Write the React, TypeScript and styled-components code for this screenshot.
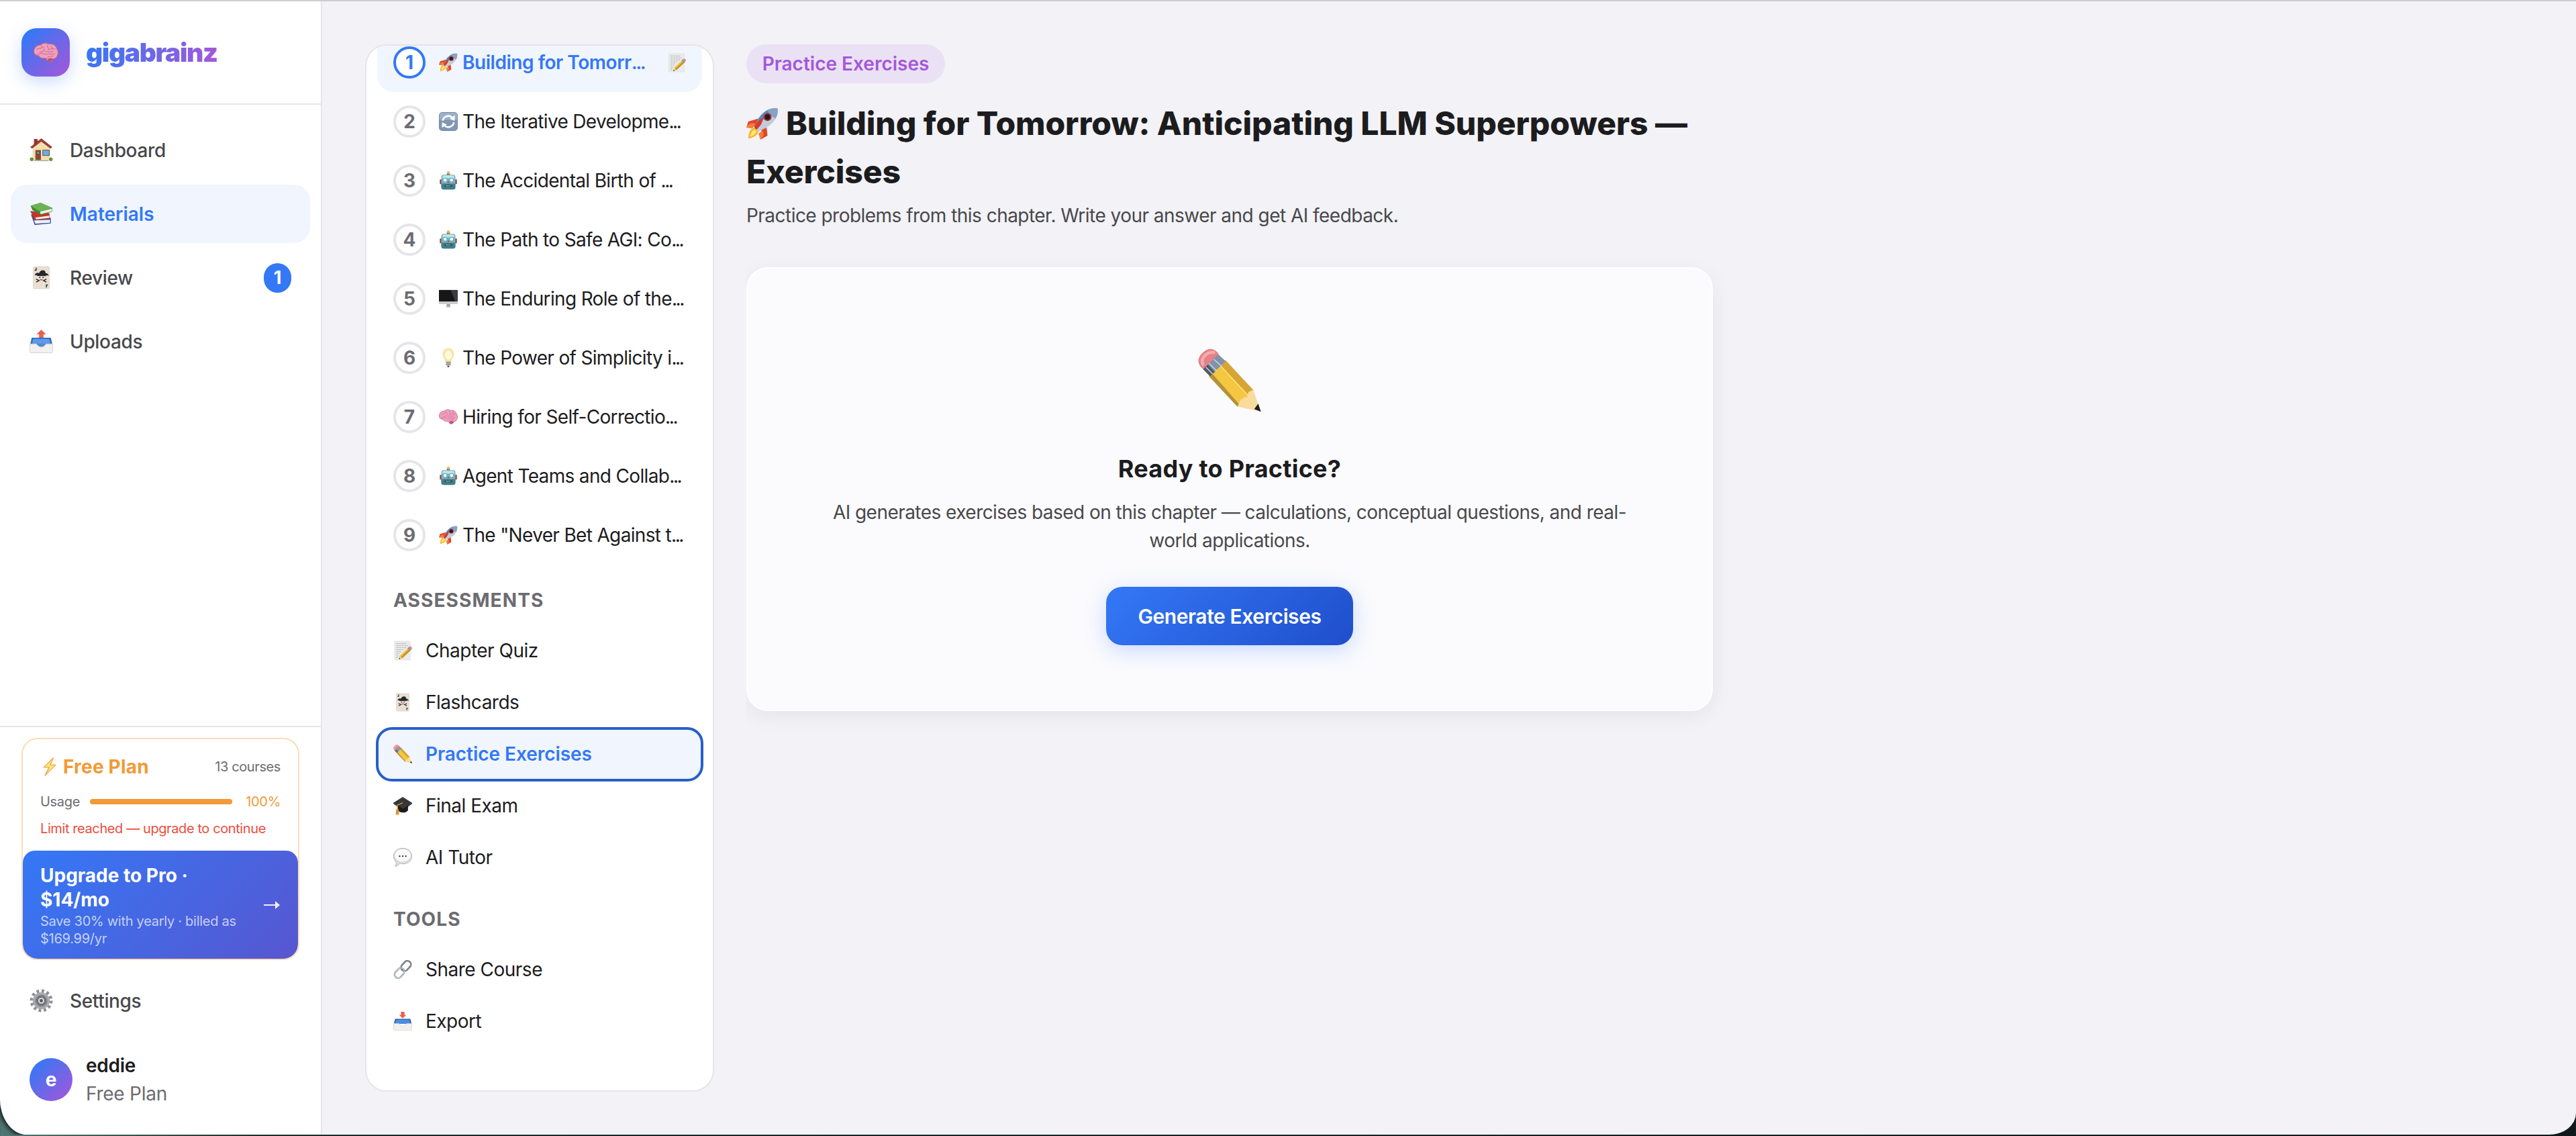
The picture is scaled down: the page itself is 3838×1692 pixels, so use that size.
import React from "react";
import styled, { createGlobalStyle, css } from 'styled-components'

const colors = {
    page: '#f2f2f7',
    surface: '#ffffff',
    line: '#e5e5ea',
    text: '#1c1c1e',
    textSoft: '#48484a',
    textMuted: '#6c6c70',
    blue: '#3478f6',
    blueTint: '#f0f5fe',
    purple: '#a458da',
    orange: '#f19a37',
    red: '#eb4e3d',
}

const GlobalStyle = createGlobalStyle`
    * {
        box-sizing: border-box;
    }

    body {
        margin: 0;
        overflow: hidden;
        background: linear-gradient(90deg, #4f7773 0, #1d2b2b 400px, #10181a 100%);
        font-family: Inter, "Liberation Sans", sans-serif;
        font-size: 28px;
        color: ${colors.text};
    }

    h1, h2, h3, p {
        margin: 0;
    }
`

/* ---------- icons ---------- */

const glyphs = {
    brain: <>
        <path d="M.5 15C0 10 4 6 9 6c3-3 8-3 11-1 5-1 9 2 10 6 2 3 2 7 0 10-1 2-3 3-5 3 0 3-3 5-6 3-2-1-3-3-3-4-4 1-8 0-9-3-4 0-6-2-6.500-5z" fill="#f0a0bd" stroke="#c4668b" strokeWidth="1" />
        <path d="M4 12c3-3 5 0 7-3M10 7c1 2 4 1 4 4s-3 4-6 4M18 6c-1 3 2 3 1 6M20 12c3-2 5 0 8-1M15 15c3-2 6 2 10-1M4 18c3 0 4-2 7-1s4 2 7 1 6 1 9-1M18 22c2-2 5 0 7-2M23 7c-1 2 1 3 2 3" fill="none" stroke="#cc7398" strokeWidth="1" strokeLinecap="round" />
        <path d="M18 24c2-1 5-2 7 0-1 3-4 5-7 3z" fill="#b5596f" />
    </>,
    house: <>
        <path d="M6 1h5v9H6z" fill="#9b3a2c" />
        <path d="M4 13 16 3l12 10v16H4z" fill="#f3deb0" />
        <path d="M1.500 12 16 .5 30.500 12l-2 1.500L16 4 3.500 13.500z" fill="#b13b30" stroke="#5d2a25" strokeWidth=".7" />
        <path d="M8 16h7.500v14H8z" fill="#8a4a30" />
        <path d="M10 18h3.500v3.500H10zM18 16h9v7.500h-9z" fill="#6cabdc" stroke="#5f4a41" strokeWidth=".8" />
        <path d="M6 29.500h20v1.500H6z" fill="#b8ada4" />
        <circle cx="3" cy="28.500" r="2.500" fill="#62963b" />
        <circle cx="29" cy="28.500" r="2.500" fill="#62963b" />
    </>,
    books: <>
        <path d="m2 17 5 14 22-2v-7z" fill="#2f4796" />
        <path d="m6 25 22-1v4L8 29.500z" fill="#eeeef3" />
        <path d="m1 12 6 13 21-2.500-1-7.500z" fill="#c53526" />
        <path d="m8 21 19-2.500v3L9 23.500z" fill="#f2ede8" />
        <path d="M1.500 5 15 1l16 7v5l-16 4.500L4 11z" fill="#3f8a35" />
        <path d="M1.500 5 15 1l16 7-16.500 5z" fill="#6cb453" />
        <path d="m14.500 13 16-4v3.500l-15.500 4z" fill="#eff2ea" />
    </>,
    joker: <>
        <rect x="5" y="1" width="22" height="30" rx="1.500" fill="#e9e0d4" stroke="#d6cbbd" strokeWidth=".6" />
        <path d="M9 2.500V6H7M23 29.500V26h2" fill="none" stroke="#2a2a2c" strokeWidth="1.300" />
        <path d="M7 13c1-4 5-4 6-3 1-5 9-6 9 0 3 0 4 2 4 4-2-2-3-1-4 0H11c-1-1-2-2-4-1z" fill="#25282c" />
        <path d="M11 14h10v4l-5 3-5-3z" fill="#f3dfd6" />
        <path d="m9 18 4 2-4 2M23 18l-4 2 4 2M13 15.500h2M17.500 15.500h2" fill="none" stroke="#25282c" strokeWidth="1.300" />
        <path d="M13 18h6l-3 2z" fill="#cf4b46" />
    </>,
    outbox: <>
        <path d="m16 0 6.500 6.500H19V11h-6V6.500H9.500z" fill="#e9604e" />
        <path d="M3 11h26l2 9H1z" fill="#2f6bb5" />
        <path d="M5 12.500h22l2 8H3z" fill="#5d9ae8" />
        <path d="M10 19c2 6 10 6 12 0z" fill="#4f88cf" />
        <path d="M.5 19.500h9c2 6 11 6 13 0h9V30q0 1.500-1.500 1.500H2Q.5 31.500.5 30z" fill="#f2f1ef" stroke="#cfcfcf" strokeWidth=".8" />
    </>,
    inbox: <>
        <path d="m16 11 6-5.500h-3V0h-6v5.500h-3z" fill="#e9604e" />
        <path d="M3 12h26l2 8H1z" fill="#2f5fa0" />
        <path d="M5 13.500h22l2 7H3z" fill="#4d8de2" />
        <path d="M.5 20h9c2 6 11 6 13 0h9V30q0 1.500-1.500 1.500H2Q.5 31.500.5 30z" fill="#f2f1ef" stroke="#cfcfcf" strokeWidth=".8" />
    </>,
    rocket: <>
        <path d="M12 11 2 14l-2 6 9-1zM20 19l1 9-7 4 1-10z" fill="#e2452b" />
        <path d="M0 20c2-4 5-5 9-4l-3 5zM14 32c3-3 4-5 2-9l-4 3z" fill="#f47e3a" />
        <path d="M8 20c-4 1-6 5-6 11 5-1 9-3 10-7z" fill="#fbb52c" />
        <path d="M8 22c-2 1-4 4-4 7 3-1 5-3 6-5z" fill="#fdec7a" />
        <path d="M31 1c-8-1-14 3-19 10l-4 9 4 4 8-4C28 15 32 9 31 1z" fill="#c2ccd8" />
        <path d="M31 1c-8-1-14 3-19 10l-4 9 2 2C14 14 22 5 31 1z" fill="#5c88bf" />
        <path d="M31 1c-4-.5-7 0-10 2 2 4 4 6 8 8 2-3 2.500-6 2-10z" fill="#87a2c4" />
        <circle cx="21" cy="9.500" r="4" fill="#a52f2b" />
        <circle cx="21" cy="9.500" r="2.600" fill="#1e1c22" />
        <path d="M8 20c2-5 5-8 9-10-1 5-3 9-7 12z" fill="#d43c2d" />
    </>,
    refresh: <>
        <rect x=".5" y=".5" width="31" height="31" rx="5" fill="#8097b4" stroke="#677d9a" />
        <path d="M1 6q0-5 5-5h20q5 0 5 5v7H1z" fill="#9db0c8" />
        <path d="M6.500 14.500A9.700 9.700 0 0 1 22.500 9M25.500 17.500A9.700 9.700 0 0 1 9.500 23" fill="none" stroke="#fff" strokeWidth="3" />
        <path d="m27 5.500-.5 9.500-8-4zM5 26.500l.5-9.500 8 4z" fill="#fff" />
    </>,
    robot: <>
        <path d="M13.500 3h5v4h-5z" fill="#5b4a93" />
        <circle cx="16" cy="2.500" r="2.500" fill="#f0b44a" />
        <path d="M1.500 14h4v8h-4zM26.500 14h4v8h-4z" fill="#a93a38" />
        <rect x="4" y="6" width="24" height="25" rx="4" fill="#7cb3bb" />
        <path d="M4 21h24v6q0 4-4 4H8q-4 0-4-4z" fill="#3f7f8b" />
        <path d="M6 10q0-3 3-3h14q3 0 3 3v2H6z" fill="#c5e6e8" />
        <circle cx="10.500" cy="15" r="3.400" fill="#fff" stroke="#4fb3d4" strokeWidth="1.500" />
        <circle cx="21.500" cy="15" r="3.400" fill="#fff" stroke="#4fb3d4" strokeWidth="1.500" />
        <path d="m16 16 2.200 4h-4.400z" fill="#d8493c" />
        <path d="M10 23.500h12v3H10z" fill="#1f3b42" />
        <path d="M12 25h8" stroke="#fff" strokeWidth="1.600" strokeDasharray="1.500 1" />
    </>,
    desktop: <>
        <path d="M13 25h6v5h-6z" fill="#a0a0a5" />
        <path d="M12 29h8v1.500h-8z" fill="#c3c3c8" />
        <path d="M0 1h32v20H0z" fill="#161616" />
        <path d="M20 1h12v20h-4z" fill="#3c3c3e" />
        <path d="M0 20.500h32V25H0z" fill="#c9c9ce" />
    </>,
    bulb: <>
        <path d="M16 0c5.500 0 9 4 9 9 0 6-4 8-4.500 14h-9C11 17 7 15 7 9c0-5 3.500-9 9-9z" fill="#f8e9a4" stroke="#e9d688" strokeWidth=".8" />
        <ellipse cx="16" cy="11" rx="5.500" ry="8" fill="#fffbe3" />
        <path d="M12 22h8v6l-2 2h-4l-2-2z" fill="#b5b5ae" />
        <path d="M12 24.500h8M12 27h8" stroke="#85857f" strokeWidth="1" />
        <path d="M14 30h4l-1 2h-2z" fill="#3b3b3b" />
    </>,
    memo: <>
        <path d="M2 0h27v32H2z" fill="#ebebec" stroke="#d8d8d9" strokeWidth=".6" />
        <path d="M5 4h18M5 7.500h20M5 11h18M5 14.500h12M5 18h8M5 21.500h6M5 25h4M5 28h3" stroke="#a2a2a5" strokeWidth=".9" strokeDasharray="3.500 1" />
        <path d="m27 10 4 4-16 15-5 1 1-5z" fill="#f0bf35" />
        <path d="m29 12 2 2-16 15-2-2z" fill="#c88f23" />
        <path d="m24 12 3-2.500 4 4-3 3z" fill="#8c9bb3" />
        <path d="m26.500 10 1.500-1.500q4 0 4 4l-1.500 1.500z" fill="#e88b8d" />
        <path d="m11 25 4 4-5 1.500z" fill="#f1d59b" />
        <path d="m10.400 28 1.800 2-2.700.7z" fill="#2b2b2b" />
    </>,
    pencil: <>
        <path d="M5.500 14 14 6l14 15.500-8 8z" fill="#f5c640" />
        <path d="m11 9 3-3 14 15-2.500 3z" fill="#d7a536" />
        <path d="m5.500 14 1.500-1.500 14 16-1 1z" fill="#b3903a" />
        <path d="m11 8.500 14.500 15.500" stroke="#ffe377" strokeWidth=".6" />
        <path d="m20 29.500 1.500-3.500 1.500-1 2-.5.500-2.500 2.500-1L31.800 32z" fill="#f8dc9c" />
        <path d="m28.500 30.700 2-2.700 1.400 4.100z" fill="#1b1d22" />
        <path d="M2.500 10.500 10 2.700 14 6.500 6 14z" fill="#8192a9" />
        <path d="M2.500 10.500 5 8l3.500 4L6 14z" fill="#515a66" />
        <path d="m4 9.500 3.500 3.500M5.500 7.500 9.500 11.500M8 5.500l4 3.500" stroke="#c7d5e6" strokeWidth=".5" />
        <path d="M2.500 10.500C-.5 8-.5 5 2 2.500S7.500-1 10.500 2.700z" fill="#e58287" />
        <path d="M2.500 8C1 5.500 4 1.500 8 2" fill="none" stroke="#f2acab" strokeWidth="1.500" strokeLinecap="round" />
    </>,
    cap: <>
        <path d="M8 16v8c2 4 13 6 17 0v-8z" fill="#1d1d1f" />
        <path d="M16 1 32 11 17 22 0 11z" fill="#37373a" />
        <path d="M0 11 17 22l15-11v1.500L17 24 0 12.500z" fill="#141416" />
        <path d="M16 11 7 15v9" fill="none" stroke="#d9963a" strokeWidth="1.600" />
        <path d="M5 22h4l1 9-6 .5z" fill="#d99432" />
    </>,
    speech: <>
        <path d="M16 .5c9 0 15.500 5.500 15.500 13.500S25 27 16 27c-2 0-4-.2-5-.6C9 29 6 31 3 31.500c1.500-2 2-4 2-7C2 22 .5 18 .5 14 .5 6 7 .5 16 .5z" fill="#dcdcde" stroke="#adadb0" strokeWidth="1" />
        <ellipse cx="16" cy="12.500" rx="13.500" ry="10.500" fill="#fafafa" />
        <path d="M9.500 14h2.400M14.800 14h2.400M20.100 14h2.400" stroke="#2c2c2e" strokeWidth="2.400" />
    </>,
    link: <>
        <rect x="-9.500" y="-6" width="19" height="12" rx="6" transform="translate(21.500 10) rotate(-48)" fill="none" stroke="#55565c" strokeWidth="2.800" />
        <rect x="-9.500" y="-6" width="19" height="12" rx="6" transform="translate(21.200 10.300) rotate(-48)" fill="none" stroke="#aebdcc" strokeWidth="1" />
        <rect x="-9.500" y="-6" width="19" height="12" rx="6" transform="translate(10.500 22) rotate(-48)" fill="none" stroke="#78838f" strokeWidth="2.800" />
        <rect x="-9.500" y="-6" width="19" height="12" rx="6" transform="translate(10.500 22) rotate(-48)" fill="none" stroke="#dbe6f1" strokeWidth="1.200" />
    </>,
    gear: <>
        <circle cx="16" cy="16" r="13.200" fill="none" stroke="#8d8f94" strokeWidth="4.600" strokeDasharray="3.500 3.410" />
        <circle cx="16" cy="16" r="10" fill="#8a8d92" stroke="#a8abb0" strokeWidth="3" />
        <circle cx="16" cy="16" r="6.800" fill="#6f7277" />
        <circle cx="16" cy="16" r="3.200" fill="#55575b" stroke="#d7d9dc" strokeWidth="2" />
    </>,
    bolt: <>
        <path d="M22 1 6 17h9L8 31 26 13h-9z" fill="#fbe48b" stroke="#f0a638" strokeWidth="1.500" strokeLinejoin="round" />
    </>,
}

type GlyphName = keyof typeof glyphs

const GlyphSvg = styled.svg<{ $size: number }>`
    width: ${p => p.$size}px;
    height: ${p => p.$size}px;
    flex: none;
    overflow: visible;
`

function Glyph({ name, size = 28 }: { name: GlyphName, size?: number }) {
    return <GlyphSvg viewBox="0 0 32 32" $size={size} aria-hidden>{glyphs[name]}</GlyphSvg>
}

/* ---------- shell ---------- */

const AppWindow = styled.div`
    display: flex;
    height: 1690px;
    overflow: hidden;
    border-top: 2px solid #cdcdcd;
    border-radius: 0 0 40px 40px / 0 0 32px 54px;
    box-shadow: 0 0 6px 3px #14191f;
    background: ${colors.page};
`

const SidebarStyle = styled.aside`
    display: flex;
    flex-direction: column;
    flex: none;
    width: 480px;
    background: ${colors.surface};
    border-right: 2px solid ${colors.line};
`

const BrandStyle = styled.div`
    display: flex;
    align-items: center;
    gap: 24px;
    height: 154px;
    padding: 0 32px;
    border-bottom: 2px solid ${colors.line};
`

const BrandMark = styled.div`
    display: flex;
    align-items: center;
    justify-content: center;
    width: 72px;
    height: 72px;
    border-radius: 22px;
    background: linear-gradient(135deg, ${colors.blue} 10%, #a855d8);
    box-shadow: 0 8px 24px rgba(52, 120, 246, 0.25);
`

const BrandName = styled.div`
    font-size: 39px;
    font-weight: 900;
    letter-spacing: -1.4px;
    line-height: 54px;
    background: linear-gradient(100deg, ${colors.blue}, #a458da);
    background-clip: text;
    color: transparent;
`

const NavStyle = styled.nav`
    display: flex;
    flex-direction: column;
    flex: 1;
    gap: 8px;
    padding: 24px 16px;
`

const NavItemStyle = styled.a<{ $active?: boolean }>`
    display: flex;
    align-items: center;
    gap: 25px;
    height: 87px;
    padding: 0 28px;
    border-radius: 24px;
    font-weight: ${p => p.$active ? 600 : 500};
    letter-spacing: ${p => p.$active ? 0 : -0.35}px;
    color: ${p => p.$active ? colors.blue : colors.textSoft};
    background: ${p => p.$active ? colors.blueTint : 'transparent'};
`

const NavBadge = styled.span`
    display: flex;
    align-items: center;
    justify-content: center;
    width: 41px;
    height: 44px;
    margin-left: auto;
    border-radius: 21px;
    background: ${colors.blue};
    color: #fff;
    font-size: 27px;
    font-weight: 700;
`

type NavItemProps = { icon: GlyphName, label: string, active?: boolean, badge?: number }

function NavItem({ icon, label, active, badge }: NavItemProps) {
    return <NavItemStyle $active={active}>
        <Glyph name={icon} size={35} />
        {label}
        {badge && <NavBadge>{badge}</NavBadge>}
    </NavItemStyle>
}

const SidebarFooter = styled.div`
    height: 609px;
    padding: 16px;
    border-top: 2px solid ${colors.line};
`

const PlanCard = styled.div`
    height: 331px;
    margin: 0 16px 17px;
    border: 2px solid #fbdcb8;
    border-radius: 24px;
    overflow: hidden;
`

const PlanInfo = styled.div`
    height: 166px;
    padding: 23px 26px 0;
    font-size: 20px;
    letter-spacing: -0.4px;
    color: ${colors.textMuted};
`

const PlanRow = styled.div`
    display: flex;
    align-items: center;
    justify-content: space-between;
    height: 36px;
`

const PlanName = styled.div`
    display: flex;
    align-items: center;
    gap: 6px;
    font-size: 28px;
    font-weight: 700;
    letter-spacing: 0.2px;
    color: ${colors.orange};
`

const UsageRow = styled(PlanRow)`
    height: 28px;
    margin: 20px 0 13px;
    letter-spacing: -0.3px;

    b {
        font-weight: 400;
        color: ${colors.orange};
    }
`

const UsageBar = styled.div`
    width: 212px;
    height: 8px;
    margin-left: -5px;
    border-radius: 4px;
    background: ${colors.orange};
`

const LimitNote = styled.p`
    line-height: 26px;
    letter-spacing: -0.4px;
    white-space: nowrap;
    color: ${colors.red};
`

const UpgradeButton = styled.div`
    display: flex;
    align-items: center;
    justify-content: space-between;
    height: 162px;
    padding: 0 27px 0 26px;
    border-radius: 18px 18px 22px 22px;
    color: #fff;
    background: linear-gradient(135deg, ${colors.blue}, #5856d0);

    h3 {
        font-size: 28px;
        line-height: 36px;
        font-weight: 700;
        letter-spacing: 0;
    }

    p {
        margin-top: 1px;
        font-size: 20px;
        line-height: 26px;
        letter-spacing: -0.27px;
        white-space: nowrap;
        color: rgba(255, 255, 255, 0.7);
    }
`

const ArrowSvg = styled.svg`
    width: 24px;
    height: 12px;
    flex: none;
`

const UserRow = styled.div`
    display: flex;
    align-items: center;
    gap: 20px;
    height: 84px;
    margin-top: 32px;
    padding: 0 28px;
    line-height: 42px;
    letter-spacing: -0.25px;
    color: ${colors.textMuted};

    strong {
        display: block;
        font-weight: 600;
        color: ${colors.text};
    }
`

const Avatar = styled.div`
    display: flex;
    align-items: center;
    justify-content: center;
    width: 64px;
    height: 64px;
    border-radius: 50%;
    font-weight: 700;
    color: #fff;
    background: linear-gradient(135deg, ${colors.blue} 10%, #a855d8);
`

function Sidebar() {
    return <SidebarStyle>
        <BrandStyle>
            <BrandMark><Glyph name="brain" size={37} /></BrandMark>
            <BrandName>gigabrainz</BrandName>
        </BrandStyle>
        <NavStyle>
            <NavItem icon="house" label="Dashboard" />
            <NavItem icon="books" label="Materials" active />
            <NavItem icon="joker" label="Review" badge={1} />
            <NavItem icon="outbox" label="Uploads" />
        </NavStyle>
        <SidebarFooter>
            <PlanCard>
                <PlanInfo>
                    <PlanRow>
                        <PlanName><Glyph name="bolt" />Free Plan</PlanName>
                        <span>13 courses</span>
                    </PlanRow>
                    <UsageRow>
                        <span>Usage</span>
                        <UsageBar />
                        <b>100%</b>
                    </UsageRow>
                    <LimitNote>Limit reached — upgrade to continue</LimitNote>
                </PlanInfo>
                <UpgradeButton>
                    <div>
                        <h3>Upgrade to Pro ·<br />$14/mo</h3>
                        <p>Save 30% with yearly · billed as<br />$169.99/yr</p>
                    </div>
                    <ArrowSvg viewBox="0 0 24 12">
                        <path d="M0 5h17V0l7 6-7 6V7H0z" fill="#fff" fillOpacity=".9" />
                    </ArrowSvg>
                </UpgradeButton>
            </PlanCard>
            <NavItem icon="gear" label="Settings" />
            <UserRow>
                <Avatar>e</Avatar>
                <div>
                    <strong>eddie</strong>
                    Free Plan
                </div>
            </UserRow>
        </SidebarFooter>
    </SidebarStyle>
}

/* ---------- course outline ---------- */

const Content = styled.main`
    display: flex;
    align-items: flex-start;
    gap: 48px;
    padding: 64px;
`

const OutlineStyle = styled.div`
    flex: none;
    width: 520px;
    height: 1560px;
    padding: 0 16px;
    overflow: hidden;
    border: 2px solid ${colors.line};
    border-radius: 32px;
    background: ${colors.surface};
`

/* the list is scrolled down a little, so the first row is cut off */
const OutlineList = styled.div`
    margin-top: -19px;
`

const activeRow = css`
    font-weight: 600;
    color: ${colors.blue};
    background: ${colors.blueTint};
`

const ChapterRow = styled.div<{ $active?: boolean }>`
    display: flex;
    align-items: center;
    height: 88px;
    padding: 0 24px;
    border-radius: 24px;
    letter-spacing: ${p => p.$active ? -0.45 : -0.66}px;
    white-space: nowrap;
    ${p => p.$active && activeRow}

    svg:last-child {
        margin-left: auto;
    }
`

const ChapterNumber = styled.span<{ $active?: boolean }>`
    display: flex;
    align-items: center;
    justify-content: center;
    flex: none;
    width: 48px;
    height: 48px;
    margin-right: 20px;
    border: 4px solid ${p => p.$active ? colors.blue : colors.line};
    border-radius: 50%;
    background: ${colors.surface};
    font-weight: 700;
    letter-spacing: 0;
    color: ${p => p.$active ? colors.blue : colors.textMuted};
`

const ChapterTitle = styled.span`
    margin-left: 7px;
`

const Ellipsis = styled.span`
    letter-spacing: -2.4px;
`

const SectionHeading = styled.h3`
    height: 89.5px;
    padding: 35px 24px 0;
    font-size: 28px;
    line-height: 36px;
    font-weight: 700;
    letter-spacing: 1.1px;
    color: ${colors.textMuted};
`

const ToolRow = styled.div<{ $active?: boolean }>`
    display: flex;
    align-items: center;
    gap: 20px;
    height: 77px;
    padding: 0 24px;
    border-radius: 22px;
    letter-spacing: ${p => p.$active ? -0.05 : -0.5}px;
    ${p => p.$active && css`
        ${activeRow}
        outline: 4px solid #285fc9;
        outline-offset: -2px;
    `}
`

const chapters: { icon: GlyphName, title: string }[] = [
    { icon: 'rocket', title: 'Building for Tomorr' },
    { icon: 'refresh', title: 'The Iterative Developme' },
    { icon: 'robot', title: 'The Accidental Birth of ' },
    { icon: 'robot', title: 'The Path to Safe AGI: Co' },
    { icon: 'desktop', title: 'The Enduring Role of the' },
    { icon: 'bulb', title: 'The Power of Simplicity i' },
    { icon: 'brain', title: 'Hiring for Self-Correctio' },
    { icon: 'robot', title: 'Agent Teams and Collab' },
    { icon: 'rocket', title: 'The "Never Bet Against t' },
]

const assessments: { icon: GlyphName, label: string }[] = [
    { icon: 'memo', label: 'Chapter Quiz' },
    { icon: 'joker', label: 'Flashcards' },
    { icon: 'pencil', label: 'Practice Exercises' },
    { icon: 'cap', label: 'Final Exam' },
    { icon: 'speech', label: 'AI Tutor' },
]

const tools: { icon: GlyphName, label: string }[] = [
    { icon: 'link', label: 'Share Course' },
    { icon: 'inbox', label: 'Export' },
]

function CourseOutline() {
    return <OutlineStyle>
        <OutlineList>
            { chapters.map((chapter, i) => (
                <ChapterRow key={i} $active={i === 0}>
                    <ChapterNumber $active={i === 0}>{i + 1}</ChapterNumber>
                    <Glyph name={chapter.icon} />
                    <ChapterTitle>{chapter.title}<Ellipsis>...</Ellipsis></ChapterTitle>
                    {i === 0 && <Glyph name="memo" size={27} />}
                </ChapterRow>
            )) }
            <SectionHeading>ASSESSMENTS</SectionHeading>
            { assessments.map(item => (
                <ToolRow key={item.label} $active={item.label === 'Practice Exercises'}>
                    <Glyph name={item.icon} />{item.label}
                </ToolRow>
            )) }
            <SectionHeading>TOOLS</SectionHeading>
            { tools.map(item => (
                <ToolRow key={item.label}>
                    <Glyph name={item.icon} />{item.label}
                </ToolRow>
            )) }
        </OutlineList>
    </OutlineStyle>
}

/* ---------- exercises ---------- */

const Exercises = styled.section`
    flex: none;
    width: 1440px;
`

const Tag = styled.div`
    display: inline-flex;
    align-items: center;
    justify-content: center;
    width: 296px;
    height: 58px;
    border-radius: 29px;
    font-weight: 600;
    color: ${colors.purple};
    background: #ebe1f4;
`

const Title = styled.h1`
    margin-top: 24px;
    font-size: 48px;
    line-height: 72px;
    font-weight: 800;
    letter-spacing: -0.07px;
    white-space: nowrap;

    svg {
        margin-right: 11px;
        vertical-align: -7px;
    }
`

const Subtitle = styled.p`
    margin-top: 8px;
    line-height: 42px;
    letter-spacing: -0.53px;
    color: ${colors.textSoft};
`

const EmptyCard = styled.div`
    display: flex;
    flex-direction: column;
    align-items: center;
    height: 661px;
    margin-top: 56px;
    padding-top: 119px;
    border: 2px solid #fff;
    border-radius: 32px;
    background: #fbfbfe;
    box-shadow: 0 8px 32px rgba(0, 0, 0, 0.06);
    clip-path: inset(-60px -60px -60px 0);
    text-align: center;

    h2 {
        margin-top: 58px;
        font-size: 36px;
        line-height: 54px;
        font-weight: 700;
        letter-spacing: 0.25px;
    }

    p {
        margin-top: 17px;
        line-height: 42px;
        letter-spacing: -0.54px;
        white-space: nowrap;
        color: ${colors.textSoft};
    }
`

const PrimaryButton = styled.button`
    width: 368px;
    height: 87px;
    margin-top: 48px;
    padding: 0;
    border: 0;
    border-radius: 24px;
    font: 600 30px Inter, "Liberation Sans", sans-serif;
    letter-spacing: -0.4px;
    white-space: nowrap;
    color: #fff;
    background: linear-gradient(135deg, ${colors.blue}, #1f4ecb);
    box-shadow: 0 8px 32px rgba(52, 120, 246, 0.25);
`

function PracticeExercises() {
    return <Exercises>
        <Tag>Practice Exercises</Tag>
        <Title>
            <Glyph name="rocket" size={48} />
            Building for Tomorrow: Anticipating LLM Superpowers —<br />Exercises
        </Title>
        <Subtitle>Practice problems from this chapter. Write your answer and get AI feedback.</Subtitle>
        <EmptyCard>
            <Glyph name="pencil" size={94} />
            <h2>Ready to Practice?</h2>
            <p>
                AI generates exercises based on this chapter — calculations, conceptual questions, and real-<br />
                world applications.
            </p>
            <PrimaryButton>Generate Exercises</PrimaryButton>
        </EmptyCard>
    </Exercises>
}

export default function App() {
    return <>
        <GlobalStyle />
        <AppWindow>
            <Sidebar />
            <Content>
                <CourseOutline />
                <PracticeExercises />
            </Content>
        </AppWindow>
    </>
}
